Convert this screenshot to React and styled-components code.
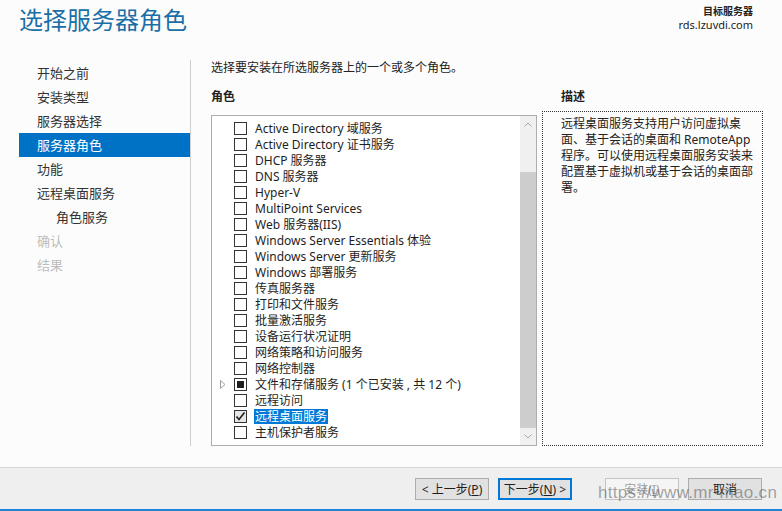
import React from "react";
import styled, { createGlobalStyle } from "styled-components";

const GlobalStyle = createGlobalStyle`
  html, body {
    margin: 0;
    padding: 0;
    background: #fcfcfc;
  }
  body {
    font-family: "Noto Sans", "Noto Sans CJK SC", sans-serif;
    color: #1e1e1e;
  }
`;

const Window = styled.div`
  position: relative;
  width: 782px;
  height: 511px;
  display: flex;
  flex-direction: column;
  background: #fcfcfc;
  overflow: hidden;
`;

const Header = styled.div`
  height: 58px;
  display: flex;
  justify-content: space-between;
  align-items: flex-start;
  padding: 0 29px 0 19px;
  box-sizing: border-box;
`;

const Title = styled.h1`
  margin: 5px 0 0;
  font-size: 24px;
  font-weight: 400;
  line-height: 30px;
  color: #1a6fa6;
`;

const Target = styled.div`
  margin-top: 5px;
  text-align: right;
  font-size: 11px;
  line-height: 13px;
  color: #222;

  b {
    display: block;
    font-weight: 700;
    font-size: 10px;
  }
`;

const Body = styled.div`
  flex: 1;
  display: flex;
`;

const Nav = styled.ul`
  list-style: none;
  margin: 2px 0 21px 19px;
  padding: 1px 0 0;
  width: 171px;
  border-right: 1px solid #cfcfcf;
`;

const NavItem = styled.li`
  height: 24px;
  line-height: 24px;
  font-size: 13px;
  padding-left: ${({ $indent }) => ($indent ? 37 : 18)}px;
  color: ${({ $active, $disabled }) =>
    $active ? "#fff" : $disabled ? "#bdbdbd" : "#333"};
  background: ${({ $active }) => ($active ? "#0072c6" : "transparent")};
`;

const Content = styled.div`
  flex: 1;
  display: flex;
  flex-direction: column;
  padding: 2px 19px 21px 20px;
`;

const Intro = styled.p`
  margin: 0;
  font-size: 12px;
  line-height: 16px;
  color: #222;
`;

const Columns = styled.div`
  flex: 1;
  margin-top: 13px;
  display: grid;
  grid-template-columns: 326px 1fr;
  column-gap: 5px;
`;

const Column = styled.div`
  display: flex;
  flex-direction: column;
`;

const Heading = styled.div`
  font-size: 12px;
  font-weight: 700;
  line-height: 16px;
  color: #222;
  padding-left: ${({ $pad }) => $pad || 0}px;
  margin-bottom: ${({ $gap }) => $gap}px;
`;

const ListBox = styled.div`
  flex: 1;
  display: flex;
  border: 1px solid #adadad;
  background: #fff;
`;

const Items = styled.div`
  flex: 1;
  padding: 4px 0 0 8px;
`;

const Row = styled.div`
  height: 16px;
  display: flex;
  align-items: center;
  font-size: 12px;
  color: #1e1e1e;
`;

const Expander = styled.span`
  width: 14px;
  display: flex;
  align-items: center;
`;

const Box = styled.span`
  width: 11px;
  height: 11px;
  border: 1px solid #333;
  background: ${({ $hot }) => ($hot ? "#e5e5e5" : "#fff")};
  display: flex;
  align-items: center;
  justify-content: center;
  margin-right: 8px;
  flex-shrink: 0;
`;

const Partial = styled.span`
  width: 7px;
  height: 7px;
  background: #1e1e1e;
`;

const Label = styled.span`
  line-height: 15px;
  white-space: nowrap;
  padding: 0 ${({ $selected }) => ($selected ? "1px" : "0")};
  margin-left: ${({ $selected }) => ($selected ? "-1px" : "0")};
  color: ${({ $selected }) => ($selected ? "#fff" : "inherit")};
  background: ${({ $selected }) => ($selected ? "#0078d7" : "transparent")};
`;

const ScrollBar = styled.div`
  width: 16px;
  display: flex;
  flex-direction: column;
  background: #f0f0f0;
`;

const ScrollButton = styled.div`
  height: 17px;
  display: flex;
  align-items: center;
  justify-content: center;
`;

const Track = styled.div`
  height: ${({ $h }) => $h}px;
`;

const Thumb = styled.div`
  flex: 1;
  background: #cdcdcd;
`;

const DescBox = styled.div`
  flex: 1;
  border: 1px dotted #333;
  padding: 4px 5px 0 18px;
  font-size: 12px;
  line-height: 16px;
  color: #222;
`;

const Footer = styled.div`
  height: 44px;
  border-top: 1px solid #d9d9d9;
  border-bottom: 2px solid #1c86d9;
  background: #efefef;
  display: flex;
  align-items: flex-start;
  justify-content: flex-end;
  padding: 10px 20px 0 0;
  box-sizing: border-box;
`;

const Button = styled.button`
  width: 74px;
  height: 22px;
  margin-left: ${({ $gap }) => $gap}px;
  padding: 0;
  font-family: inherit;
  font-size: 12px;
  color: ${({ disabled }) => (disabled ? "#a0a0a0" : "#1e1e1e")};
  background: ${({ disabled }) => (disabled ? "#f5f5f5" : "#e1e1e1")};
  border: 1px solid
    ${({ $primary, disabled }) =>
      $primary ? "#0078d7" : disabled ? "#c4c4c4" : "#adadad"};
  box-shadow: ${({ $primary }) => ($primary ? "inset 0 0 0 1px #0078d7" : "none")};

  u {
    text-decoration: underline;
  }
`;

const Watermark = styled.div`
  position: absolute;
  left: 598px;
  top: 483px;
  font-family: "Liberation Sans", sans-serif;
  font-size: 17px;
  color: rgba(90, 90, 90, 0.55);
  letter-spacing: 0.3px;
  pointer-events: none;
`;

const Chevron = ({ up }) => (
  <svg width="8" height="5" viewBox="0 0 8 5">
    <path
      d={up ? "M0.5 4.5 L4 1 L7.5 4.5" : "M0.5 0.5 L4 4 L7.5 0.5"}
      fill="none"
      stroke="#a6a6a6"
      strokeWidth="1"
    />
  </svg>
);

const Arrow = () => (
  <svg width="6" height="9" viewBox="0 0 6 9">
    <path d="M0.5 0.5 L5 4.5 L0.5 8.5 Z" fill="none" stroke="#a0a0a0" strokeWidth="1" />
  </svg>
);

const Check = () => (
  <svg width="11" height="11" viewBox="0 0 11 11">
    <path d="M1.5 5.5 L4 8.5 L9.5 1.5" fill="none" stroke="#1e1e1e" strokeWidth="1.6" />
  </svg>
);

const navItems = [
  { label: "开始之前" },
  { label: "安装类型" },
  { label: "服务器选择" },
  { label: "服务器角色", active: true },
  { label: "功能" },
  { label: "远程桌面服务" },
  { label: "角色服务", indent: true },
  { label: "确认", disabled: true },
  { label: "结果", disabled: true },
];

const roles = [
  { label: "Active Directory 域服务" },
  { label: "Active Directory 证书服务" },
  { label: "DHCP 服务器" },
  { label: "DNS 服务器" },
  { label: "Hyper-V" },
  { label: "MultiPoint Services" },
  { label: "Web 服务器(IIS)" },
  { label: "Windows Server Essentials 体验" },
  { label: "Windows Server 更新服务" },
  { label: "Windows 部署服务" },
  { label: "传真服务器" },
  { label: "打印和文件服务" },
  { label: "批量激活服务" },
  { label: "设备运行状况证明" },
  { label: "网络策略和访问服务" },
  { label: "网络控制器" },
  { label: "文件和存储服务 (1 个已安装 , 共 12 个)", state: "partial", expandable: true },
  { label: "远程访问" },
  { label: "远程桌面服务", state: "checked", selected: true },
  { label: "主机保护者服务" },
];

export default function App() {
  return (
    <Window>
      <GlobalStyle />
      <Header>
        <Title>选择服务器角色</Title>
        <Target>
          <b>目标服务器</b>
          rds.lzuvdi.com
        </Target>
      </Header>
      <Body>
        <Nav>
          {navItems.map((item) => (
            <NavItem
              key={item.label}
              $active={item.active}
              $disabled={item.disabled}
              $indent={item.indent}
            >
              {item.label}
            </NavItem>
          ))}
        </Nav>
        <Content>
          <Intro>选择要安装在所选服务器上的一个或多个角色。</Intro>
          <Columns>
            <Column>
              <Heading $gap={10}>角色</Heading>
              <ListBox>
                <Items>
                  {roles.map((r) => (
                    <Row key={r.label}>
                      <Expander>{r.expandable && <Arrow />}</Expander>
                      <Box $hot={r.selected}>
                        {r.state === "checked" && <Check />}
                        {r.state === "partial" && <Partial />}
                      </Box>
                      <Label $selected={r.selected}>{r.label}</Label>
                    </Row>
                  ))}
                </Items>
                <ScrollBar>
                  <ScrollButton>
                    <Chevron up />
                  </ScrollButton>
                  <Track $h={39} />
                  <Thumb />
                  <ScrollButton>
                    <Chevron />
                  </ScrollButton>
                </ScrollBar>
              </ListBox>
            </Column>
            <Column>
              <Heading $gap={6} $pad={19}>
                描述
              </Heading>
              <DescBox>
                远程桌面服务支持用户访问虚拟桌面、基于会话的桌面和 RemoteApp
                程序。可以使用远程桌面服务安装来配置基于虚拟机或基于会话的桌面部署。
              </DescBox>
            </Column>
          </Columns>
        </Content>
      </Body>
      <Footer>
        <Button $gap={0}>
          &lt; 上一步(<u>P</u>)
        </Button>
        <Button $gap={9} $primary>
          下一步(<u>N</u>) &gt;
        </Button>
        <Button $gap={33} disabled>
          安装(<u>I</u>)
        </Button>
        <Button $gap={9}>取消</Button>
      </Footer>
      <Watermark>https://www.mr-mao.cn</Watermark>
    </Window>
  );
}
